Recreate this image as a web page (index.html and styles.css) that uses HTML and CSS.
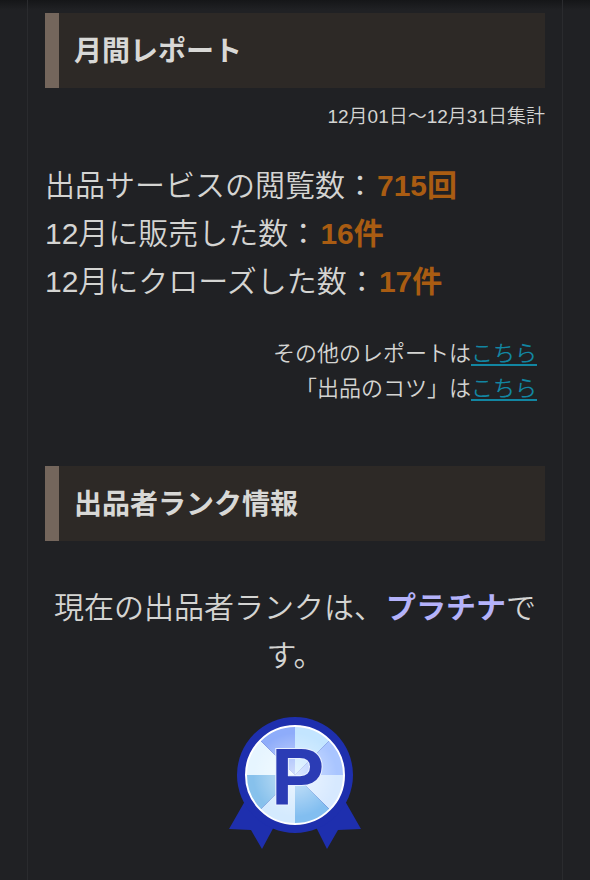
FILE: index.html
```html
<!DOCTYPE html>
<html lang="ja">
<head>
  <meta charset="UTF-8">
  <meta name="viewport" content="width=device-width, initial-scale=1.0">
  <title>月間レポート</title>
  <link rel="stylesheet" href="styles.css">
</head>
<body>
  <main class="container">
    <section class="report">
      <h2 class="heading">月間レポート</h2>
      <p class="period">12月01日〜12月31日集計</p>
      <ul class="stats">
        <li>出品サービスの閲覧数：<strong>715回</strong></li>
        <li>12月に販売した数：<strong>16件</strong></li>
        <li>12月にクローズした数：<strong>17件</strong></li>
      </ul>
      <div class="links">
        <p>その他のレポートは<a href="#report">こちら</a></p>
        <p>「出品のコツ」は<a href="#tips">こちら</a></p>
      </div>
    </section>

    <section class="rank">
      <h2 class="heading">出品者ランク情報</h2>
      <p class="rank-text">現在の出品者ランクは、<strong>プラチナ</strong>です。</p>
      <svg class="badge" width="132" height="132" viewBox="0 0 132 132" role="img" aria-label="プラチナ">
        <defs>
          <radialGradient id="shine">
            <stop offset="0" stop-color="#fff" stop-opacity=".6"/>
            <stop offset="1" stop-color="#fff" stop-opacity="0"/>
          </radialGradient>
        </defs>
        <!-- ribbon -->
        <path d="M16 84 L0 112 L22 113 L33 132 L48 104 Z M116 84 L132 112 L109 113 L98 132 L84 104 Z" fill="#1e2fae"/>
        <circle cx="66" cy="58" r="58" fill="#1e2fae"/>
        <!-- facets -->
        <g transform="translate(66 58)">
          <path d="M0 0 V-49 A49 49 0 0 1 34.6 -34.6 Z" fill="#c3e5ff"/>
          <path d="M0 0 L34.6 -34.6 A49 49 0 0 1 49 0 Z" fill="#a9c5ff"/>
          <path d="M0 0 H49 A49 49 0 0 1 34.6 34.6 Z" fill="#d7e9ff"/>
          <path d="M0 0 L34.6 34.6 A49 49 0 0 1 0 49 Z" fill="#82bef0"/>
          <path d="M0 0 V49 A49 49 0 0 1 -34.6 34.6 Z" fill="#d4eafe"/>
          <path d="M0 0 L-34.6 34.6 A49 49 0 0 1 -49 0 Z" fill="#87c1ec"/>
          <path d="M0 0 H-49 A49 49 0 0 1 -34.6 -34.6 Z" fill="#e6f5ff"/>
          <path d="M0 0 L-34.6 -34.6 A49 49 0 0 1 0 -49 Z" fill="#8eacfa"/>
          <circle r="42" fill="url(#shine)"/>
          <circle r="49" fill="none" stroke="#fff" stroke-width="2"/>
        </g>
        <text class="badge-letter" x="42" y="87">P</text>
      </svg>
    </section>
  </main>
</body>
</html>
```

FILE: styles.css
```css
* { box-sizing:border-box; }
body {
  margin:0;
  min-height:100vh;
  background:linear-gradient(#151618, #202124 10px) #202124;
  color:#d4d4d2;
  font-family:"Liberation Sans","Noto Sans CJK JP",sans-serif;
  font-size:30px;
  font-weight:350;
  line-height:48px;
}
h2, p, ul { margin:0; padding:0; }
strong { font-weight:bold; }

.container {
  min-height:100vh;
  margin:0 27px;
  padding:13px 17px 30px;
  border:solid #2a2b2e;
  border-width:0 1px;
}

.heading {
  padding:15px 15px 12px;
  border-left:14px solid #74665c;
  background:#2d2926;
  color:#d8d8d6;
  font-size:28px;
  font-weight:bold;
}
.period { margin-top:13px; font-size:19px; line-height:32px; text-align:right; }

.stats { margin-top:29px; list-style:none; }
.stats strong { margin-left:2px; color:#a95c12; }

.links { margin:30px 8px 0 0; font-size:22px; line-height:35px; text-align:right; }
.links a { color:#1286a2; text-underline-offset:3px; text-decoration-thickness:2px; }

.rank { margin-top:60px; text-align:center; }
.rank .heading { text-align:left; }
.rank-text { margin-top:43px; }
.rank-text strong { margin-left:2px; color:#b4b2fa; }

.badge { display:block; margin:37px auto 0; }
.badge-letter {
  font-size:80px;
  font-weight:bold;
  fill:#2b3cb5;
  stroke:#e8f0ff;
  stroke-width:2px;
  paint-order:stroke;
}
```
